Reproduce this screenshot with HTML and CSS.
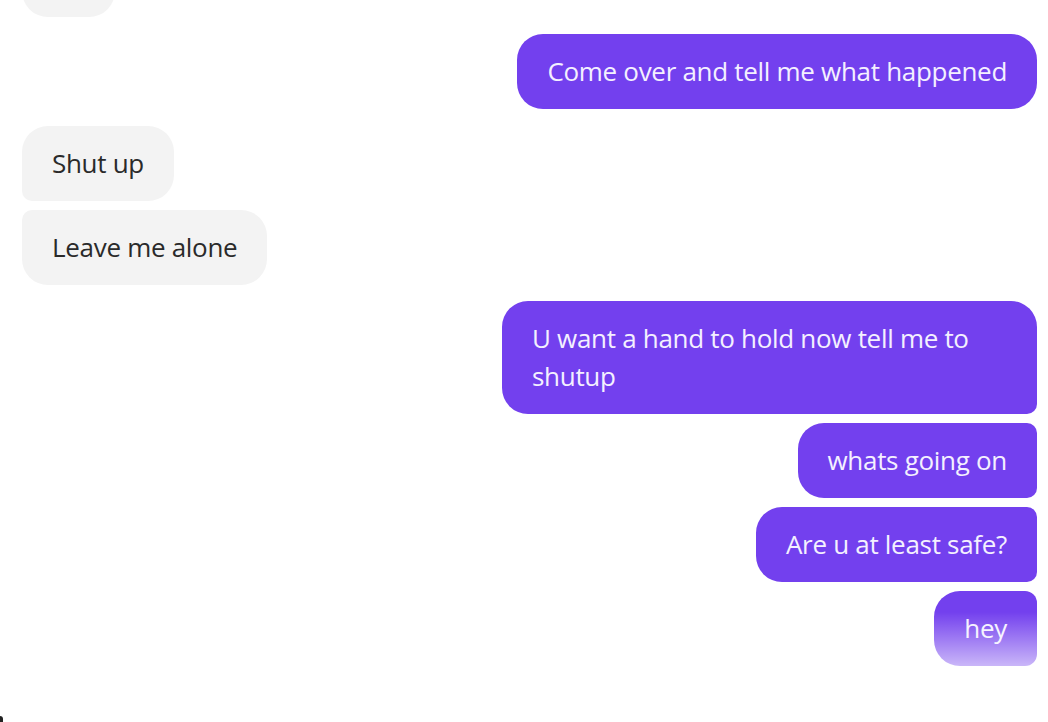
FILE: index.html
```html
<!DOCTYPE html>
<html lang="en">
<head>
<meta charset="utf-8">
<title>Chat</title>
<link rel="stylesheet" href="styles.css">
</head>
<body>
<div class="chat">
  <div class="thread">
    <div class="group in">
      <div class="bubble in single">Ok</div>
    </div>
    <div class="group out">
      <div class="bubble out single">Come over and tell me what happened</div>
    </div>
    <div class="group in">
      <div class="bubble in first">Shut up</div>
      <div class="bubble in last">Leave me alone</div>
    </div>
    <div class="group out tight">
      <div class="bubble out first wide">U want a hand to hold now tell me to shutup</div>
      <div class="bubble out middle">whats going on</div>
      <div class="bubble out middle">Are u at least safe?</div>
      <div class="bubble out tail">hey</div>
    </div>
  </div>
  <div class="fade"></div>
  <div class="corner"></div>
</div>
</body>
</html>
```

FILE: styles.css
```css
html, body {
  margin: 0;
  padding: 0;
  background: #ffffff;
}

body {
  font-family: "Open Sans", "Noto Sans", "Liberation Sans", sans-serif;
  width: 1048px;
  height: 722px;
  overflow: hidden;
}

.chat {
  position: relative;
  width: 1048px;
  height: 722px;
  overflow: hidden;
}

.thread {
  display: flex;
  flex-direction: column;
  gap: 17px;
  margin-top: -58px;
  padding: 0 11px 0 22px;
}

.group {
  display: flex;
  flex-direction: column;
  gap: 9px;
}

.group.in { align-items: flex-start; }
.group.out { align-items: flex-end; }

.group.tight { margin-top: -1px; }

.bubble {
  font-size: 26px;
  line-height: 38px;
  padding: 18px 30px 19px 30px;
  border-radius: 26px;
  max-width: 475px;
  letter-spacing: -0.3px;
}

.bubble.in {
  background: #f3f3f3;
  color: #2a2a2a;
}

.bubble.out {
  background: #7340ee;
  color: #f4f0ff;
}

.bubble.in.first { border-radius: 26px 26px 26px 10px; }
.bubble.in.last { border-radius: 10px 26px 26px 26px; }

.bubble.out.first { border-radius: 26px 26px 10px 26px; }
.bubble.out.middle { border-radius: 26px 10px 10px 26px; }
.bubble.out.tail { border-radius: 26px 12px 12px 26px; }

.fade {
  position: absolute;
  left: 0;
  right: 0;
  top: 612px;
  height: 110px;
  background: linear-gradient(to bottom, rgba(255,255,255,0) 0px, rgba(255,255,255,0.62) 54px, #ffffff 80px);
}

.corner {
  position: absolute;
  left: 0;
  bottom: 0;
  width: 3px;
  height: 6px;
  background: #222222;
  border-top-right-radius: 3px;
}
```
